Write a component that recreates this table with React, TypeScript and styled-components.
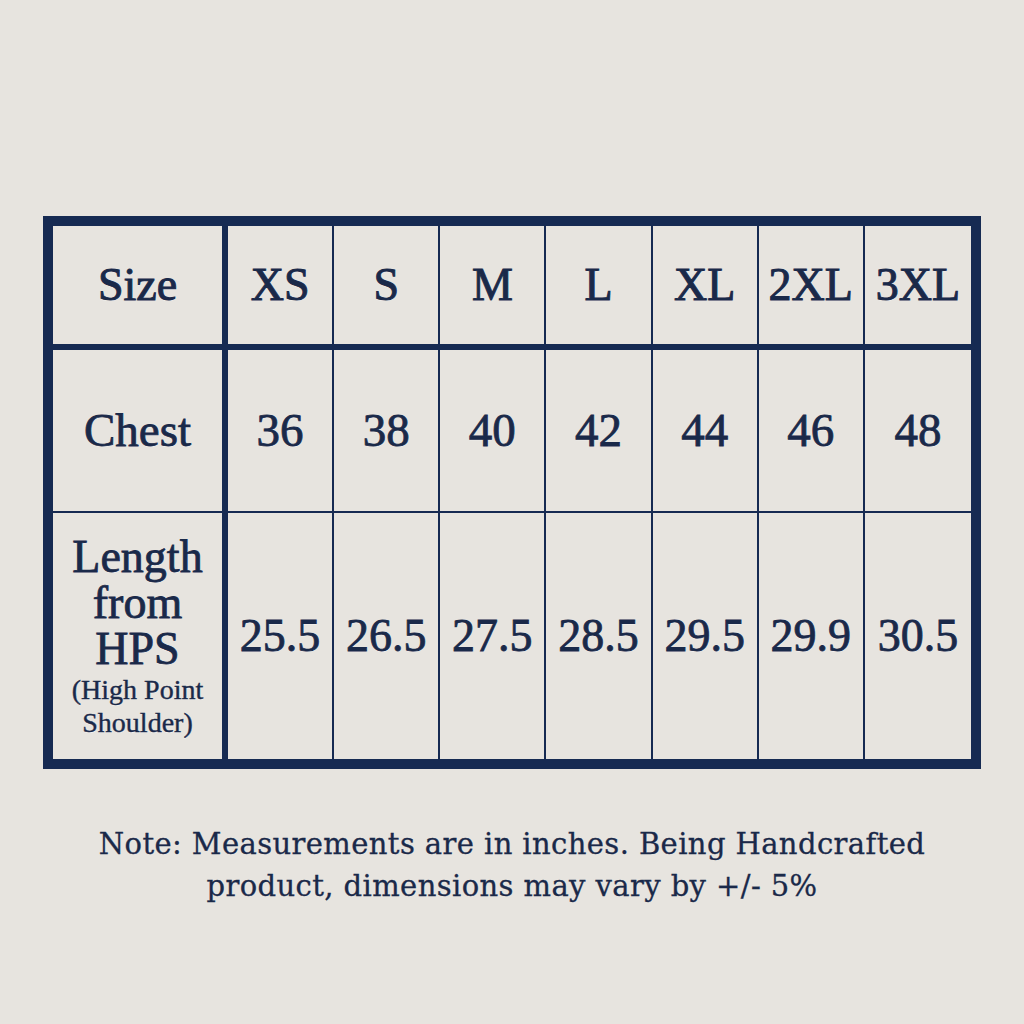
import React from "react";
import styled, { createGlobalStyle } from "styled-components";

const navy = "#162a52";
const ink = "#1a2949";

const Global = createGlobalStyle`
  html, body { margin: 0; padding: 0; background: #e7e4df; }
  body { font-family: "Liberation Serif", "Times New Roman", serif; color: ${ink}; }
`;

const Page = styled.div`
  width: 1024px;
  height: 1024px;
  box-sizing: border-box;
  padding: 216px 43px 0 43px;
  display: flex;
  flex-direction: column;
  align-items: stretch;
  background: #e7e4df;
`;

const Table = styled.div`
  box-sizing: border-box;
  height: 553px;
  border: 10px solid ${navy};
  display: grid;
  grid-template-columns: 175px repeat(7, 1fr);
  grid-template-rows: 124px 163px 1fr;
`;

const Cell = styled.div<{ $label?: boolean; $head?: boolean; $lastCol?: boolean; $lastRow?: boolean }>`
  box-sizing: border-box;
  display: flex;
  flex-direction: column;
  align-items: center;
  justify-content: center;
  text-align: center;
  border-right: ${(p) => (p.$lastCol ? "0" : p.$label ? `6px solid ${navy}` : `2px solid ${navy}`)};
  border-bottom: ${(p) => (p.$lastRow ? "0" : p.$head ? `6px solid ${navy}` : `2px solid ${navy}`)};
  color: ${ink};
  text-shadow: 0 1px 0 rgba(255, 255, 255, 0.55);
`;

const HeadText = styled.span`
  font-size: 46px;
  line-height: 1;
  -webkit-text-stroke: 1px ${ink};
`;

const ValueText = styled.span<{ $size?: number }>`
  font-size: ${(p) => p.$size ?? 47}px;
  line-height: 1;
  -webkit-text-stroke: 0.8px ${ink};
  white-space: nowrap;
`;

const LabelMain = styled.span`
  font-size: 46px;
  line-height: 46px;
  -webkit-text-stroke: 0.8px ${ink};
`;

const LabelSub = styled.span`
  font-size: 28px;
  line-height: 31px;
  margin-top: 2px;
  white-space: nowrap;
  -webkit-text-stroke: 0.4px ${ink};
`;

const Note = styled.p`
  margin: 54px 0 0 0;
  text-align: center;
  font-family: "DejaVu Serif", "Liberation Serif", serif;
  font-size: 29px;
  line-height: 42px;
  color: ${ink};
  letter-spacing: 0.4px;
  -webkit-text-stroke: 0.3px ${ink};
`;

const sizes = ["XS", "S", "M", "L", "XL", "2XL", "3XL"];
const chest = ["36", "38", "40", "42", "44", "46", "48"];
const length = ["25.5", "26.5", "27.5", "28.5", "29.5", "29.9", "30.5"];

export default function App() {
  return (
    <>
      <Global />
      <Page>
        <Table>
          <Cell $label $head>
            <HeadText>Size</HeadText>
          </Cell>
          {sizes.map((s, i) => (
            <Cell key={s} $head $lastCol={i === sizes.length - 1}>
              <HeadText>{s}</HeadText>
            </Cell>
          ))}
          <Cell $label>
            <ValueText>Chest</ValueText>
          </Cell>
          {chest.map((c, i) => (
            <Cell key={c} $lastCol={i === chest.length - 1}>
              <ValueText>{c}</ValueText>
            </Cell>
          ))}
          <Cell $label $lastRow>
            <LabelMain>Length</LabelMain>
            <LabelMain>from</LabelMain>
            <LabelMain>HPS</LabelMain>
            <LabelSub>(High Point</LabelSub>
            <LabelSub>Shoulder)</LabelSub>
          </Cell>
          {length.map((l, i) => (
            <Cell key={l} $lastRow $lastCol={i === length.length - 1}>
              <ValueText $size={46}>{l}</ValueText>
            </Cell>
          ))}
        </Table>
        <Note>
          Note: Measurements are in inches. Being Handcrafted
          <br />
          product, dimensions may vary by +/- 5%
        </Note>
      </Page>
    </>
  );
}
